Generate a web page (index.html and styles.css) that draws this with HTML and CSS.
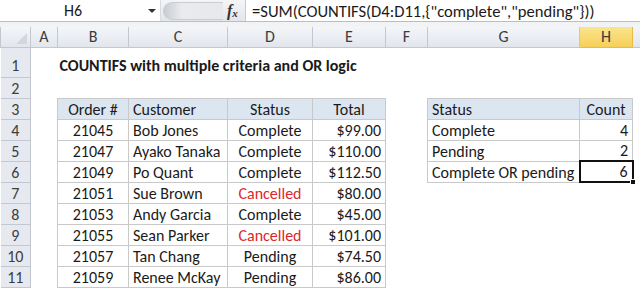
FILE: index.html
```html
<!DOCTYPE html>
<html lang="en">
<head>
    <meta charset="UTF-8">
    <title>COUNTIFS with multiple criteria and OR logic</title>
    <link rel="stylesheet" href="styles.css">
</head>
<body>
    <!-- Formula bar -->
    <div class="formula-bar">
        <div class="name-box">
            <span class="cell-ref">H6</span>
            <span class="drop"></span>
        </div>
        <div class="fx-area">
            <span class="grip"></span>
            <span class="fx">f<sub>x</sub></span>
        </div>
        <div class="formula">=SUM(COUNTIFS(D4:D11,{"complete","pending"}))</div>
    </div>
    <div class="bar-gap"></div>

    <!-- Worksheet -->
    <table class="sheet">
        <colgroup>
            <col style="width:30px">
            <col style="width:27px">
            <col style="width:71px">
            <col style="width:99px">
            <col style="width:85px">
            <col style="width:73px">
            <col style="width:42px">
            <col style="width:152px">
            <col style="width:53px">
            <col style="width:8px">
        </colgroup>
        <tr class="col-heads">
            <th class="corner"><span class="tri"></span></th>
            <th>A</th><th>B</th><th>C</th><th>D</th><th>E</th><th>F</th><th>G</th>
            <th class="active">H</th><th></th>
        </tr>
        <tr class="r-title">
            <th class="rh">1</th><td></td>
            <td class="title" colspan="6">COUNTIFS with multiple criteria and OR logic</td>
            <td></td><td></td>
        </tr>
        <tr>
            <th class="rh">2</th><td></td><td></td><td></td><td></td><td></td><td></td><td></td><td></td><td></td>
        </tr>
        <tr>
            <th class="rh">3</th><td></td>
            <td class="b hdr c">Order #</td>
            <td class="b hdr">Customer</td>
            <td class="b hdr c">Status</td>
            <td class="b hdr c">Total</td>
            <td></td>
            <td class="b hdr">Status</td>
            <td class="b hdr c">Count</td>
            <td></td>
        </tr>
        <tr>
            <th class="rh">4</th><td></td>
            <td class="b c">21045</td><td class="b">Bob Jones</td><td class="b c">Complete</td><td class="b r">$99.00</td>
            <td></td><td class="b">Complete</td><td class="b r">4</td><td></td>
        </tr>
        <tr>
            <th class="rh">5</th><td></td>
            <td class="b c">21047</td><td class="b">Ayako Tanaka</td><td class="b c">Complete</td><td class="b r">$110.00</td>
            <td></td><td class="b">Pending</td><td class="b r">2</td><td></td>
        </tr>
        <tr>
            <th class="rh active">6</th><td></td>
            <td class="b c">21049</td><td class="b">Po Quant</td><td class="b c">Complete</td><td class="b r">$112.50</td>
            <td></td><td class="b">Complete OR pending</td><td class="b r selected">6<span class="handle"></span></td><td></td>
        </tr>
        <tr>
            <th class="rh">7</th><td></td>
            <td class="b c">21051</td><td class="b">Sue Brown</td><td class="b c red">Cancelled</td><td class="b r">$80.00</td>
            <td></td><td></td><td></td><td></td>
        </tr>
        <tr>
            <th class="rh">8</th><td></td>
            <td class="b c">21053</td><td class="b">Andy Garcia</td><td class="b c">Complete</td><td class="b r">$45.00</td>
            <td></td><td></td><td></td><td></td>
        </tr>
        <tr>
            <th class="rh">9</th><td></td>
            <td class="b c">21055</td><td class="b">Sean Parker</td><td class="b c red">Cancelled</td><td class="b r">$101.00</td>
            <td></td><td></td><td></td><td></td>
        </tr>
        <tr>
            <th class="rh">10</th><td></td>
            <td class="b c">21057</td><td class="b">Tan Chang</td><td class="b c">Pending</td><td class="b r">$74.50</td>
            <td></td><td></td><td></td><td></td>
        </tr>
        <tr>
            <th class="rh">11</th><td></td>
            <td class="b c">21059</td><td class="b">Renee McKay</td><td class="b c">Pending</td><td class="b r">$86.00</td>
            <td></td><td></td><td></td><td></td>
        </tr>
    </table>
</body>
</html>
```

FILE: styles.css
```css
:root {
    --grid-line: #c9c9c9;
    --head-line: #c3c8d0;
    --head-bg: #e6eaf0;
    --table-head: #dce6f1;
    --active-line: #e9b949;
    --text: #1a1a1a;
}

* {
    margin: 0;
    padding: 0;
    box-sizing: border-box;
}

body {
    width: 640px;
    height: 288px;
    overflow: hidden;
    background: white;
    font-family: Carlito, Lato, "Liberation Sans", sans-serif;
    font-size: 16px;
    color: var(--text);
}

/* Formula bar */
.formula-bar {
    display: flex;
    height: 22px;
    background: white;
    border-bottom: 1px solid #b9bec6;
}

.name-box {
    width: 160px;
    display: flex;
    align-items: center;
}

.cell-ref {
    width: 146px;
    text-align: center;
    font-size: 16px;
}

.drop {
    width: 0;
    height: 0;
    border-left: 4px solid transparent;
    border-right: 4px solid transparent;
    border-top: 4px solid #333;
    margin-left: 2px;
}

.fx-area {
    width: 86px;
    display: flex;
    align-items: center;
    background: linear-gradient(#f4f5f7, #e3e6ea);
    border-left: 1px solid #d8dbe0;
    border-right: 1px solid #c7cbd1;
}

.grip {
    width: 60px;
    height: 18px;
    margin-left: 2px;
    border-radius: 9px 0 0 9px;
    border: 1px solid #c9cdd3;
    border-right: none;
    background: linear-gradient(90deg, #c9ccd1, #e9ebee 30%, #e6e8ec);
}

.fx {
    font-family: "Liberation Serif", serif;
    font-style: italic;
    font-weight: bold;
    font-size: 16px;
    color: #333;
    margin-left: 4px;
}

.fx sub {
    font-size: 11px;
    vertical-align: -1px;
}

.formula {
    padding-left: 6px;
    line-height: 22px;
    font-size: 16.6px;
    white-space: nowrap;
}

.bar-gap {
    height: 5px;
    background: #f2f3f5;
}

/* Worksheet grid */
.sheet {
    table-layout: fixed;
    border-collapse: collapse;
    width: 640px;
}

.sheet td,
.sheet th {
    height: 21px;
    padding: 0 4px;
    font-weight: normal;
    white-space: nowrap;
    line-height: 19px;
    vertical-align: bottom;
}

.col-heads th {
    height: 20px;
    background: linear-gradient(#f3f5f8, #e2e6ec);
    border: 1px solid var(--head-line);
    border-top: none;
    color: #3c3c3c;
    text-align: center;
    vertical-align: middle;
}

.col-heads .corner {
    position: relative;
}

.tri {
    position: absolute;
    right: 3px;
    bottom: 3px;
    width: 0;
    height: 0;
    border-left: 11px solid transparent;
    border-bottom: 11px solid #d3d7dc;
}

.sheet .active {
    background: linear-gradient(#fbe38f, #f6cf57);
    border-color: var(--active-line);
}

.sheet .rh {
    background: var(--head-bg);
    border: 1px solid var(--head-line);
    border-left: none;
    color: #3c3c3c;
    text-align: center;
    padding: 0;
}

.sheet .r-title td,
.sheet .r-title th {
    height: 30px;
    padding-bottom: 2px;
}

.sheet .title {
    font-weight: bold;
    padding-left: 2px;
}

.b {
    border: 1px solid var(--grid-line);
}

.hdr {
    background: var(--table-head);
}

.c {
    text-align: center;
}

.r {
    text-align: right;
}

.red {
    color: #e0262c;
}

.sheet .selected {
    border: 2px solid #111;
    position: relative;
}

.handle {
    position: absolute;
    right: -4px;
    bottom: -4px;
    width: 6px;
    height: 6px;
    background: #111;
    border: 1px solid white;
}
```
